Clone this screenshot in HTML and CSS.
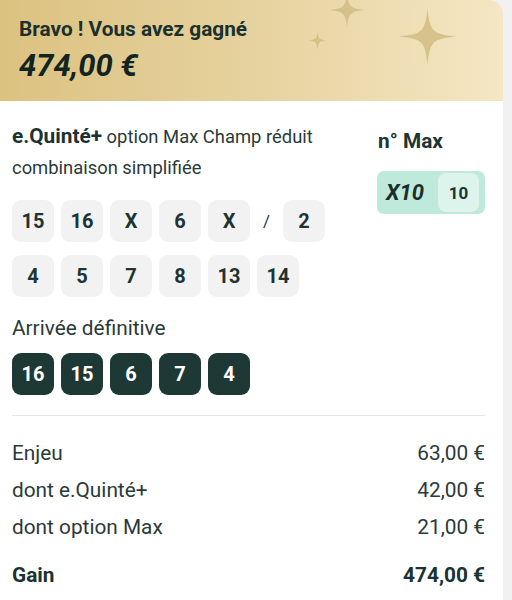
FILE: index.html
```html
<!DOCTYPE html>
<html lang="fr">
<head>
<meta charset="utf-8">
<link rel="stylesheet" href="styles.css">
</head>
<body>
<div class="card">
  <header class="hero">
    <div class="hero-title">Bravo ! Vous avez gagné</div>
    <div class="hero-amount">474,00 €</div>
    <svg class="star star-a" viewBox="-1 -1 2 2"><path d="M0,-1 C0.08,-0.18 0.18,-0.08 1,0 C0.18,0.08 0.08,0.18 0,1 C-0.08,0.18 -0.18,0.08 -1,0 C-0.18,-0.08 -0.08,-0.18 0,-1Z"/></svg>
    <svg class="star star-b" viewBox="-1 -1 2 2"><path d="M0,-1 C0.08,-0.18 0.18,-0.08 1,0 C0.18,0.08 0.08,0.18 0,1 C-0.08,0.18 -0.18,0.08 -1,0 C-0.18,-0.08 -0.08,-0.18 0,-1Z"/></svg>
    <svg class="star star-c" viewBox="-1 -1 2 2"><path d="M0,-1 C0.08,-0.18 0.18,-0.08 1,0 C0.18,0.08 0.08,0.18 0,1 C-0.08,0.18 -0.18,0.08 -1,0 C-0.18,-0.08 -0.08,-0.18 0,-1Z"/></svg>
  </header>
  <section class="content">
    <div class="bet">
      <div class="bet-main">
        <div class="bet-desc"><strong>e.Quinté+</strong> <span>option Max Champ réduit</span></div>
        <div class="bet-desc">combinaison simplifiée</div>
        <div class="chips">
          <span class="chip">15</span><span class="chip">16</span><span class="chip">X</span><span class="chip">6</span><span class="chip">X</span><span class="sep">/</span><span class="chip">2</span>
        </div>
        <div class="chips">
          <span class="chip">4</span><span class="chip">5</span><span class="chip">7</span><span class="chip">8</span><span class="chip">13</span><span class="chip">14</span>
        </div>
      </div>
      <div class="bet-side">
        <div class="side-title">n° Max</div>
        <div class="max-badge"><span class="max-mult">X10</span><span class="max-num">10</span></div>
      </div>
    </div>
    <div class="arrival-label">Arrivée définitive</div>
    <div class="chips">
      <span class="chip dark">16</span><span class="chip dark">15</span><span class="chip dark">6</span><span class="chip dark">7</span><span class="chip dark">4</span>
    </div>
    <hr class="divider">
    <div class="rows">
      <div class="row"><span>Enjeu</span><span>63,00 €</span></div>
      <div class="row"><span>dont e.Quinté+</span><span>42,00 €</span></div>
      <div class="row"><span>dont option Max</span><span>21,00 €</span></div>
      <div class="row total"><span>Gain</span><span>474,00 €</span></div>
    </div>
  </section>
</div>
</body>
</html>
```
FILE: styles.css
```css
* { box-sizing: border-box; }
html, body { margin: 0; padding: 0; }
body {
  background: #f1f1f1;
  font-family: Roboto, "Liberation Sans", sans-serif;
  color: #1e3432;
  width: 512px;
  height: 600px;
  overflow: hidden;
}
.card {
  width: 503px;
  min-height: 600px;
  background: #ffffff;
  border-top-right-radius: 14px;
  overflow: hidden;
}
.hero {
  position: relative;
  height: 101px;
  padding: 15px 19px 0;
  background: linear-gradient(90deg, #dcc281 0%, #e6d29e 50%, #f5e7c4 100%);
  overflow: hidden;
}
.hero-title {
  font-weight: 700;
  font-size: 20.8px;
  line-height: 28px;
  color: #1a302d;
}
.hero-amount {
  margin-top: 5px;
  font-weight: 700;
  font-style: italic;
  font-size: 31px;
  line-height: 36px;
  color: #12241f;
}
.star {
  position: absolute;
  fill: #d3bd84;
  opacity: 0.85;
}
.star-a { left: 399px; top: 8px; width: 57px; height: 57px; }
.star-b { left: 329px; top: -8px; width: 36px; height: 36px; }
.star-c { left: 308px; top: 31px; width: 19px; height: 19px; }

.content {
  padding: 20px 18px 0 12px;
}
.bet {
  display: flex;
  justify-content: space-between;
}
.bet-main { width: 345px; }
.bet-desc {
  margin: 0;
  font-size: 18.4px;
  line-height: 31px;
  color: #2a3a39;
  white-space: nowrap;
}
.bet-desc strong {
  font-size: 20.8px;
  font-weight: 700;
  color: #1b3230;
}
.chips {
  display: flex;
  gap: 7px;
  align-items: center;
  margin-top: 13px;
}
.bet-desc + .chips { margin-top: 17px; }
.chip {
  width: 42px;
  height: 42px;
  border-radius: 9px;
  background: #f2f2f2;
  display: flex;
  align-items: center;
  justify-content: center;
  font-weight: 700;
  font-size: 20px;
  color: #1e3432;
}
.sep {
  width: 19px;
  text-align: center;
  font-size: 17px;
  color: #2a3a39;
}
.chip.dark {
  background: #1d3835;
  color: #ffffff;
}
.bet-side {
  width: 108px;
  padding-top: 5px;
}
.side-title {
  font-weight: 700;
  font-size: 20.8px;
  line-height: 31px;
  padding-left: 1px;
}
.max-badge {
  margin-top: 14px;
  height: 43px;
  border-radius: 7px;
  background: #bfe9db;
  display: flex;
  align-items: center;
  padding: 2px 6px 2px 2px;
}
.max-mult {
  flex: 1;
  padding-left: 7px;
  font-weight: 700;
  font-style: italic;
  font-size: 22px;
  color: #1b2e2c;
}
.max-num {
  width: 41px;
  height: 39px;
  border-radius: 8px;
  background: #dcf4ec;
  display: flex;
  align-items: center;
  justify-content: center;
  font-weight: 700;
  font-size: 17px;
  color: #1e3432;
}
.arrival-label {
  margin-top: 19px;
  font-size: 20.8px;
  line-height: 24px;
  color: #2a3a39;
}
.arrival-label + .chips { margin-top: 13px; }
.divider {
  margin: 20px 0 0;
  border: 0;
  border-top: 1.5px solid #e6e6e6;
}
.rows { padding-top: 19px; }
.row {
  display: flex;
  justify-content: space-between;
  font-size: 20.8px;
  line-height: 37px;
  color: #2a3a39;
}
.row.total {
  margin-top: 11px;
  font-weight: 700;
  color: #1b3230;
}
```
